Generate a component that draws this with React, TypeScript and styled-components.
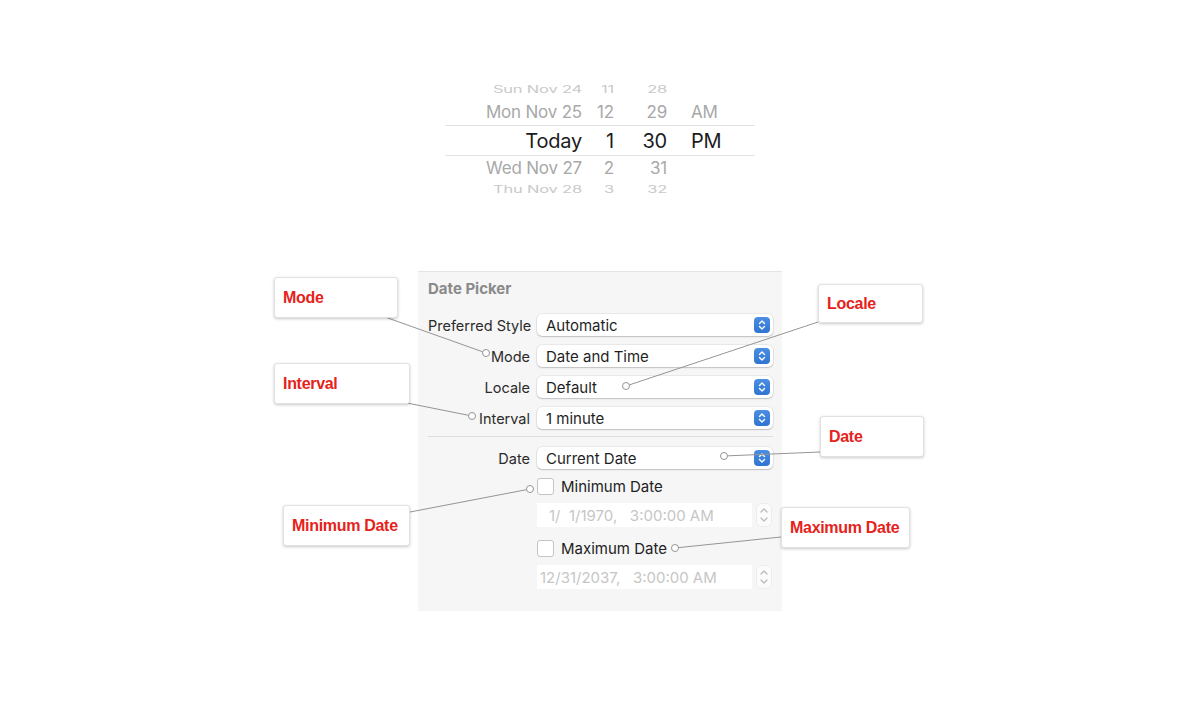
import React from 'react';
import styled, { createGlobalStyle } from 'styled-components';

const GlobalStyle = createGlobalStyle`
    html, body {
        margin: 0;
        padding: 0;
        background: #ffffff;
        font-family: Inter, 'Liberation Sans', sans-serif;
    }
`;

const Page = styled.div`
    position: relative;
    width: 1200px;
    height: 724px;
    display: flex;
    flex-direction: column;
    align-items: center;
    overflow: hidden;
`;

/* ---------- wheel picker ---------- */

const Wheel = styled.div`
    margin-top: 79px;
    width: 310px;
    height: 115px;
    display: flex;
    flex-direction: column;
    overflow: hidden;
`;

const WheelRow = styled.div`
    display: grid;
    grid-template-columns: 137px 32px 53px 88px;
    align-items: center;
    flex: 0 0 ${(p) => p.h}px;
    color: ${(p) => p.color};
    font-size: ${(p) => p.size}px;
    letter-spacing: -0.2px;
    transform: scaleY(${(p) => p.squash || 1});
    border-top: ${(p) => (p.selected ? '1px solid #e2e2e2' : 'none')};
    border-bottom: ${(p) => (p.selected ? '1px solid #e2e2e2' : 'none')};
    box-sizing: border-box;
`;

const WheelCell = styled.span`
    text-align: ${(p) => (p.left ? 'left' : 'right')};
    padding-left: ${(p) => (p.left ? '24px' : '0')};
    white-space: nowrap;
`;

/* ---------- inspector panel ---------- */

const Panel = styled.div`
    margin-top: 77px;
    width: 364px;
    background: #f6f6f6;
    border-top: 1px solid #e4e4e4;
    box-sizing: border-box;
    padding: 8px 9px 22px 10px;
`;

const Title = styled.div`
    font-size: 15px;
    font-weight: 700;
    color: #8a8a8a;
    line-height: 18px;
    margin-bottom: 16px;
`;

const Form = styled.div`
    display: grid;
    grid-template-columns: 102px 236px;
    column-gap: 7px;
    align-items: center;
`;

const Label = styled.div`
    text-align: right;
    font-size: 14.5px;
    color: #2b2b2b;
    white-space: nowrap;
    margin-top: ${(p) => p.mt || 0}px;
`;

const Popup = styled.div`
    height: 22px;
    background: #ffffff;
    border-radius: 5px;
    box-shadow: 0 0 0 0.5px rgba(0, 0, 0, 0.1), 0 1px 1.5px rgba(0, 0, 0, 0.18);
    display: flex;
    align-items: center;
    justify-content: space-between;
    padding: 0 3px 0 9px;
    font-size: 15px;
    color: #1f1f1f;
    margin-top: ${(p) => p.mt || 0}px;
`;

const BlueStepper = styled.div`
    width: 16px;
    height: 16px;
    border-radius: 4px;
    background: linear-gradient(#4a8fe3, #2f74d0);
    display: flex;
    align-items: center;
    justify-content: center;
`;

const Divider = styled.div`
    grid-column: 1 / 3;
    height: 1px;
    background: #dedede;
    margin: 7px 0 10px;
`;

const CheckRow = styled.div`
    grid-column: 2;
    display: flex;
    align-items: center;
    gap: 7px;
    font-size: 15px;
    color: #222;
    height: 18px;
    margin-top: ${(p) => p.mt || 0}px;
`;

const Checkbox = styled.div`
    width: 15px;
    height: 15px;
    background: #ffffff;
    border: 1px solid #c4c4c4;
    border-radius: 3px;
`;

const FieldRow = styled.div`
    grid-column: 2;
    display: flex;
    align-items: center;
    gap: 5px;
    margin-top: ${(p) => p.mt || 0}px;
`;

const Field = styled.div`
    width: 215px;
    height: 24px;
    background: #ffffff;
    box-sizing: border-box;
    padding-left: ${(p) => p.pad}px;
    display: flex;
    align-items: center;
    font-size: 15px;
    color: #c6c6c6;
    white-space: pre;
`;

const SmallStepper = styled.div`
    width: 14px;
    height: 22px;
    border-radius: 4px;
    background: #fbfbfb;
    box-shadow: 0 0 0 0.5px rgba(0, 0, 0, 0.08);
    display: flex;
    align-items: center;
    justify-content: center;
`;

/* ---------- callouts ---------- */

const Callout = styled.div`
    position: absolute;
    left: ${(p) => p.x}px;
    top: ${(p) => p.y}px;
    width: ${(p) => p.w}px;
    height: ${(p) => p.h}px;
    box-sizing: border-box;
    background: #ffffff;
    border: 1px solid #e2e2e2;
    border-radius: 3px;
    box-shadow: 0 1px 3px rgba(0, 0, 0, 0.22);
    display: flex;
    align-items: center;
    padding: 1px 0 0 8px;
    color: #e6221b;
    font-family: 'Liberation Sans', Arial, sans-serif;
    font-weight: 700;
    font-size: 16px;
    letter-spacing: -0.3px;
`;

const Leaders = styled.svg`
    position: absolute;
    left: 0;
    top: 0;
    pointer-events: none;
`;

const wheelRows = [
    { h: 20, size: 16.5, color: '#c9c9c9', squash: 0.62, cells: ['Sun Nov 24', '11', '28', ''] },
    { h: 26, size: 17, color: '#a8a8a8', cells: ['Mon Nov 25', '12', '29', 'AM'] },
    { h: 31, size: 20, color: '#1c1c1c', selected: true, cells: ['Today', '1', '30', 'PM'] },
    { h: 23, size: 17, color: '#a8a8a8', cells: ['Wed Nov 27', '2', '31', ''] },
    { h: 20, size: 16.5, color: '#c9c9c9', squash: 0.62, cells: ['Thu Nov 28', '3', '32', ''] },
];

const callouts = [
    { text: 'Mode', x: 274, y: 277, w: 124, h: 41 },
    { text: 'Interval', x: 274, y: 363, w: 136, h: 41 },
    { text: 'Locale', x: 818, y: 284, w: 105, h: 39 },
    { text: 'Date', x: 820, y: 416, w: 104, h: 41 },
    { text: 'Minimum Date', x: 283, y: 505, w: 127, h: 41 },
    { text: 'Maximum Date', x: 781, y: 507, w: 129, h: 41 },
];

// [from x, from y, circle x, circle y]
const leaders = [
    [385, 317, 486, 353],
    [407, 403, 472, 416],
    [818, 322, 626, 386],
    [820, 452, 724, 456],
    [410, 512, 530, 489],
    [781, 537, 675, 548],
];

const UpDown = ({ color }) => (
    <svg width="8" height="12" viewBox="0 0 8 12">
        <path
            d="M1.5 4.5 L4 2 L6.5 4.5 M1.5 7.5 L4 10 L6.5 7.5"
            fill="none"
            stroke={color}
            strokeWidth="1.4"
            strokeLinecap="round"
            strokeLinejoin="round"
        />
    </svg>
);

const SelectBox = ({ value, mt }) => (
    <Popup mt={mt}>
        <span>{value}</span>
        <BlueStepper>
            <UpDown color="#ffffff" />
        </BlueStepper>
    </Popup>
);

const DateField = ({ value, pad, mt }) => (
    <FieldRow mt={mt}>
        <Field pad={pad}>{value}</Field>
        <SmallStepper>
            <svg width="10" height="18" viewBox="0 0 10 18">
                <path
                    d="M2 6 L5 3 L8 6 M2 12 L5 15 L8 12"
                    fill="none"
                    stroke="#b9b9b9"
                    strokeWidth="1.2"
                    strokeLinecap="round"
                    strokeLinejoin="round"
                />
            </svg>
        </SmallStepper>
    </FieldRow>
);

const App = () => {
    return (
        <Page>
            <GlobalStyle />
            <Wheel>
                {wheelRows.map((row, i) => (
                    <WheelRow
                        key={i}
                        h={row.h}
                        size={row.size}
                        color={row.color}
                        squash={row.squash}
                        selected={row.selected}
                    >
                        <WheelCell>{row.cells[0]}</WheelCell>
                        <WheelCell>{row.cells[1]}</WheelCell>
                        <WheelCell>{row.cells[2]}</WheelCell>
                        <WheelCell left>{row.cells[3]}</WheelCell>
                    </WheelRow>
                ))}
            </Wheel>

            <Panel>
                <Title>Date Picker</Title>
                <Form>
                    <Label>Preferred Style</Label>
                    <SelectBox value="Automatic" />
                    <Label mt={9}>Mode</Label>
                    <SelectBox value="Date and Time" mt={9} />
                    <Label mt={9}>Locale</Label>
                    <SelectBox value="Default" mt={9} />
                    <Label mt={9}>Interval</Label>
                    <SelectBox value="1 minute" mt={9} />
                    <Divider />
                    <Label>Date</Label>
                    <SelectBox value="Current Date" />
                    <CheckRow mt={8}>
                        <Checkbox />
                        <span>Minimum Date</span>
                    </CheckRow>
                    <DateField value={'1/  1/1970,   3:00:00 AM'} pad={12} mt={8} />
                    <CheckRow mt={12}>
                        <Checkbox />
                        <span>Maximum Date</span>
                    </CheckRow>
                    <DateField value={'12/31/2037,   3:00:00 AM'} pad={3} mt={8} />
                </Form>
            </Panel>

            <Leaders width="1200" height="724">
                {leaders.map(([x1, y1, cx, cy], i) => {
                    const dx = cx - x1;
                    const dy = cy - y1;
                    const len = Math.sqrt(dx * dx + dy * dy);
                    const ex = cx - (dx / len) * 3.5;
                    const ey = cy - (dy / len) * 3.5;
                    return (
                        <g key={i}>
                            <line x1={x1} y1={y1} x2={ex} y2={ey} stroke="#959595" strokeWidth="1" />
                            <circle cx={cx} cy={cy} r="3.5" fill="#ffffff" stroke="#959595" strokeWidth="1" />
                        </g>
                    );
                })}
            </Leaders>

            {callouts.map((c) => (
                <Callout key={c.text} x={c.x} y={c.y} w={c.w} h={c.h}>
                    {c.text}
                </Callout>
            ))}
        </Page>
    );
};

export default App;
